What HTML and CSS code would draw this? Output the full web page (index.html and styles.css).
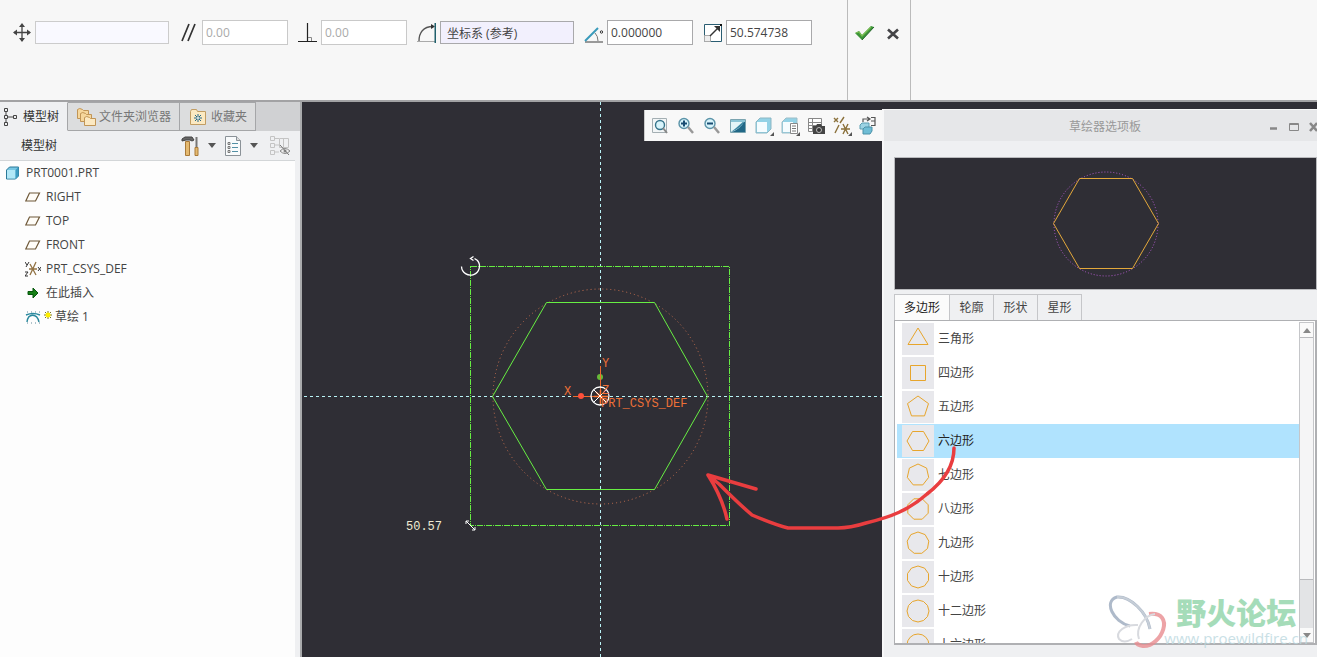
FILE: index.html
```html
<!DOCTYPE html>
<html lang="zh-CN">
<head>
<meta charset="utf-8">
<meta name="viewport" content="width=device-width, initial-scale=1">
<title>PRT0001.PRT</title>
<link rel="stylesheet" href="styles.css">
</head>
<body>
<header class="dashboard">
  <form class="fields">
    <div class="field">
      <label for="move"><svg class="icon" viewBox="0 0 20 20" role="img" aria-label="平移"><path d="M3 9.500H19M11 2V18" stroke="#444" stroke-width="1.300"/><path d="M2 9.500l4-3v6zM20 9.500l-4-3v6zM11 0l3 4H8zM11 19l3-4H8z" fill="#444"/></svg></label>
      <input class="wide pale" id="move" type="text">
    </div>
    <div class="field">
      <label for="parallel"><svg class="icon" viewBox="0 0 20 20" role="img" aria-label="平行"><path d="M4 18L11 1M10 18L17 1" stroke="#333" stroke-width="1.700"/></svg></label>
      <input class="off" id="parallel" type="text" value="0.00" disabled>
    </div>
    <div class="field">
      <label for="perp"><svg class="icon" viewBox="0 0 20 20" role="img" aria-label="垂直"><path d="M1 18.500H20M10.500 0V18" stroke="#222" stroke-width="1.200"/><path d="M11 14.500h3.500V18" fill="none" stroke="#888"/></svg></label>
      <input class="off" id="perp" type="text" value="0.00" disabled>
    </div>
    <div class="field">
      <label for="csys"><svg class="icon" viewBox="0 0 20 20" role="img" aria-label="旋转参考"><path d="M1 18.500H20" stroke="#aaa"/><path d="M3 18C3 10 7 3.500 17 3.500" fill="none" stroke="#555" stroke-width="1.300"/><path d="M15 1l4 2.500-4 2.500z" fill="#333"/><path d="M20 0V20" stroke="#20606c" stroke-width="3"/></svg></label>
      <input class="wide lilac" id="csys" type="text" value="坐标系 (参考)">
    </div>
    <div class="field">
      <label for="angle"><svg class="icon" viewBox="0 0 20 20" role="img" aria-label="角度"><path d="M2 19H20" stroke="#999" stroke-width="2"/><path d="M2 18L15 5" stroke="#399aba" stroke-width="2"/><path d="M12 10q3 3 3 8" fill="none" stroke="#777"/><circle cx="18.500" cy="9" r="1.200" fill="none" stroke="#333"/></svg></label>
      <input id="angle" type="text" value="0.000000">
    </div>
    <div class="field">
      <label for="scale"><svg class="icon" viewBox="0 0 20 20" role="img" aria-label="缩放"><path d="M2.500 1.500h17v17h-17z" fill="#fff" stroke="#2a5d72"/><path d="M2.500 12.500h6v6h-6z" fill="#eee" stroke="#aaa"/><path d="M8 13L16 5" stroke="#333" stroke-width="1.400"/><path d="M18 3v6l-6-6z" fill="#333"/><path d="M18 1h2v2h-2z" fill="#111"/></svg></label>
      <input id="scale" type="text" value="50.574738">
    </div>
  </form>
  <div class="confirm">
    <button type="button" aria-label="确定"><svg class="icon" viewBox="0 0 20 20"><path d="M0 10l4-2 3 4L16 3l3 1L7 17z" fill="#3b9438"/><path d="M1 10l3-1 3 4 9-9" fill="none" stroke="#79bd51" stroke-width="1.200"/><path d="M7 17L19 4" stroke="#25662c"/></svg></button>
    <button type="button" aria-label="取消"><svg class="icon" viewBox="0 0 20 20"><path d="M6 6.500L16 15.500M16 6.500L6 15.500" stroke="#444447" stroke-width="2.600"/></svg></button>
  </div>
</header>

<main class="work">
  <aside class="navigator">
    <nav class="nav-tabs">
      <button class="nav-tab current" type="button"><svg class="icon" viewBox="0 0 20 20"><path d="M4.500 1.500h3v3h-3zM4.500 8.500h3v3h-3zM4.500 15.500h3v3h-3zM13.500 8.500h3v3h-3zM8 10h5M6 5v3M6 12v3" fill="none" stroke="#444"/></svg>模型树</button>
      <button class="nav-tab" type="button"><svg class="icon" viewBox="0 0 20 20"><g fill="#f6d79c" stroke="#c19556"><path d="M1.500 2.500q2-2 5 0l1 1h5v8h-11z"/><path d="M4.500 6.500q2-2 5 0l1 1h5v7h-11z"/><path d="M8.500 10.500q2-2 5 0l1 1h5v7h-11z" fill="#fce9c2"/></g></svg>文件夹浏览器</button>
      <button class="nav-tab" type="button"><svg class="icon" viewBox="0 0 20 20"><path d="M2.500 4.500l1-2h5l1 2h8v13h-15z" fill="#fbe9c2" stroke="#c19d63"/><path d="M10 7v8M6 11h8M7 8l6 6M13 8l-6 6" stroke="#24698a"/><circle cx="10" cy="11" r="1" fill="#fff"/></svg>收藏夹</button>
    </nav>
    <div class="tree-bar">
      <h2>模型树</h2>
      <button type="button" aria-label="设置"><svg class="icon" viewBox="0 0 20 20"><path d="M1 3l3-2h7l2 3-2 1-2-1H5L1 5z" fill="#666" stroke="#444"/><path d="M4.500 5.500h4v14h-4z" fill="#e4b970" stroke="#a97a39"/><path d="M15.500 1v10" stroke="#777" stroke-width="2"/><path d="M14 11.500h3v8h-3z" fill="#e4b970" stroke="#a97a39"/></svg></button>
      <button class="drop" type="button" aria-label="设置菜单"><svg viewBox="0 0 8 5"><path d="M0 0h8L4 5z" fill="#555"/></svg></button>
      <button type="button" aria-label="显示"><svg class="icon" viewBox="0 0 20 20"><path d="M2.500.500h11l4 4v15h-15z" fill="#f9fbfc" stroke="#8b9298"/><path d="M13.500.500v4h4" fill="#ddd" stroke="#8b9298"/><path d="M9 7.500h6M9 11.500h6M9 15.500h6" stroke="#5390a5"/><path d="M5 6.500h2v2H5zM5 10.500h2v2H5zM5 14.500h2v2H5z" fill="none" stroke="#777"/></svg></button>
      <button class="drop" type="button" aria-label="显示菜单"><svg viewBox="0 0 8 5"><path d="M0 0h8L4 5z" fill="#555"/></svg></button>
      <button type="button" aria-label="隐藏"><svg class="icon" viewBox="0 0 20 20"><path d="M.500.500h4v4h-4zM.500 7.500h4v4h-4zM.500 14.500h4v4h-4zM9.500 2.500h9v9h-9zM5 9h4M5 16h4M5 2.500h4M13.500 2v9" fill="none" stroke="#c4c4c4"/><path d="M10 15q5-5 10 0-5 5-10 0z" fill="#eee" stroke="#888"/><circle cx="15" cy="15" r="1.500" fill="#888"/><path d="M10 9l9 10" stroke="#777"/></svg></button>
    </div>
    <ul class="tree">
      <li class="root"><svg class="glyph" viewBox="0 0 16 16"><path d="M1.500 5l3-3h9v9l-3 3h-9z" fill="#77c7e4" stroke="#2b7998"/><path d="M2 5h8.500v8.500H2z" fill="#b2e8f7"/><path d="M10.500 5l3-3v9l-3 3z" fill="#3d9bc1"/></svg>PRT0001.PRT</li>
      <li><svg class="glyph" viewBox="0 0 16 16"><path d="M4.500 4h10l-4 8H.800z" fill="#fffdf8" stroke="#6f5939" stroke-width="1.200"/></svg>RIGHT</li>
      <li><svg class="glyph" viewBox="0 0 16 16"><path d="M4.500 4h10l-4 8H.800z" fill="#fffdf8" stroke="#6f5939" stroke-width="1.200"/></svg>TOP</li>
      <li><svg class="glyph" viewBox="0 0 16 16"><path d="M4.500 4h10l-4 8H.800z" fill="#fffdf8" stroke="#6f5939" stroke-width="1.200"/></svg>FRONT</li>
      <li><svg class="glyph" viewBox="0 0 16 16"><path d="M4 8h8M5 3l6 11M11 1L5 14" stroke="#927344" stroke-width="1.300"/><path d="M0 1l2 3M4 1L1 6M0 11h3l-3 4h3M13 6l3 4M16 6l-3 4" fill="none" stroke="#333"/></svg>PRT_CSYS_DEF</li>
      <li><svg class="glyph" viewBox="0 0 16 16"><path d="M3 6.500h5V3l5 5-5 5V9.500H3z" fill="#168016" stroke="#07560d"/></svg>在此插入</li>
      <li class="sketch"><svg class="glyph" viewBox="0 0 16 16"><path d="M2 3h13M2 14h13" stroke="#64899a" stroke-dasharray="1 3"/><path d="M2 13C3 4 12 4 14 13M1 6q7-3 14 0" fill="none" stroke="#2b899e" stroke-width="1.400"/></svg><svg class="spark" viewBox="0 0 8 13"><path d="M4 0v8M0 4h8M1 1l6 6M7 1L1 7" stroke="#777126"/><circle cx="4" cy="4" r="2.500" fill="#fff000"/></svg>草绘 1</li>
    </ul>
  </aside>

  <section class="canvas" aria-label="草绘">
    <svg class="drawing" viewBox="0 0 580 555">
      <g fill="none">
        <path d="M-1000 294.500H580" stroke="#b9f3f6" stroke-dasharray="3 3"/>
        <path d="M298.500 0V1400" stroke="#b9f3f6" stroke-dasharray="3 3"/>
        <path d="M168.500 164.500H427.500V423.500H168.500Z" stroke="#66ed42" stroke-dasharray="6 1 1 1" shape-rendering="crispEdges"/>
        <circle cx="298.500" cy="294.500" r="107.500" stroke="#c8704f" stroke-dasharray="1 3"/>
        <path d="M190.500 294.500L244.500 200.500H352.500L405.500 294.500L352.500 387.500H244.500Z" stroke="#67ef43"/>
        <path d="M159.500 164.500a9 9 0 1 0 16-6l-3-2m-1 2l-3-2 3-2" stroke="#fff" stroke-width="1.300"/>
        <path d="M164 419l9 9m-9-6v-3h3m3 9h3v-3" stroke="#fff"/>
        <path d="M298.500 264V294.500H271" stroke="#ef692e"/>
        <path d="M298.500 288v14M292 294.500h14M294 290l10 10" stroke="#ff7532" stroke-width="1.500"/>
        <circle cx="298" cy="294" r="9" stroke="#fff" stroke-width="1.300"/>
        <path d="M292 288l12 12M304 288l-12 12" stroke="#fff"/>
      </g>
      <circle cx="279" cy="294" r="3" fill="#ff503b"/>
      <circle cx="298" cy="275" r="3" fill="#67ba38"/>
      <path d="M298.500 270v9" stroke="#ef692e"/>
      <g class="cad orange"><text x="262" y="293">X</text><text x="300" y="265">Y</text><text x="300" y="292">Z</text><text x="299" y="305">PRT_CSYS_DEF</text></g>
      <text class="cad cream" x="104" y="428">50.57</text>
    </svg>
    <div class="view-tools" role="toolbar" aria-label="视图">
      <button type="button" aria-label="重新调整"><svg class="icon" viewBox="0 0 20 20"><path d="M2.500 2.500h14v14h-14z" fill="#f3f6f7" stroke="#a4afb3"/><circle cx="10" cy="9" r="4.500" fill="#d8f4fb" stroke="#36748b" stroke-width="1.400"/><path d="M13 12l4 5" stroke="#888" stroke-width="2"/></svg></button>
      <button type="button" aria-label="放大"><svg class="icon" viewBox="0 0 20 20"><circle cx="8" cy="7.500" r="5" fill="#d8f4fb" stroke="#5b93a8" stroke-width="1.400"/><path d="M12 11l5 6" stroke="#999" stroke-width="2.500"/><path d="M5 7.500h6M8 4.500v6" stroke="#184c72" stroke-width="2"/></svg></button>
      <button type="button" aria-label="缩小"><svg class="icon" viewBox="0 0 20 20"><circle cx="8" cy="7.500" r="5" fill="#d8f4fb" stroke="#5b93a8" stroke-width="1.400"/><path d="M12 11l5 6" stroke="#999" stroke-width="2.500"/><path d="M5 7.500h6" stroke="#184c72" stroke-width="2"/></svg></button>
      <button type="button" aria-label="重画"><svg class="icon" viewBox="0 0 20 20"><path d="M2.500 3.500h15v13h-15z" fill="#e4f5f8" stroke="#7ba4b0"/><path d="M17 4v12H3q9-2 14-12z" fill="#216887"/><path d="M3 16l5-4 9-8q-3 8-14 12z" fill="#3b87a3"/><path d="M3 4h14v2H3z" fill="#8cc5d6"/></svg></button>
      <button type="button" aria-label="显示样式"><svg class="icon" viewBox="0 0 20 20"><path d="M2 6l4-4h11v11l-4 4H2z" fill="#93d2e6" stroke="#8cb6c3"/><path d="M3 6h10v10H3z" fill="#f5fcff"/><path d="M20 16v4h-4z" fill="#555"/></svg></button>
      <button type="button" aria-label="已保存方向"><svg class="icon" viewBox="0 0 20 20"><path d="M2 6l4-4h11v11l-4 4H2z" fill="#93d2e6" stroke="#9dbdc7"/><path d="M3 6h10v10H3z" fill="#f5fcff"/><path d="M10.500 7.500h7v10h-7z" fill="#fff" stroke="#888"/><path d="M12 10h4M12 12.500h4M12 15h4" stroke="#777"/><path d="M20 16v4h-4z" fill="#555"/></svg></button>
      <button type="button" aria-label="视图管理器"><svg class="icon" viewBox="0 0 20 20"><path d="M2.500 2.500h13v13h-13zM2 6.500h13M2 9.500h13M2 12.500h13M6.500 2v13" fill="#fff" stroke="#888"/><path d="M7 10h3l1-2h4l1 2h3v8H7z" fill="#444"/><circle cx="13" cy="14" r="2.500" fill="#333" stroke="#bbb"/></svg></button>
      <button type="button" aria-label="基准显示"><svg class="icon" viewBox="0 0 20 20"><path d="M2 2l4 4M6 2L2 6M12 1L8 7M7 9L3 17M9 13h9M11 8l5 10M16 8l-5 10" stroke="#8b713b" stroke-width="1.400"/><path d="M20 16v4h-4z" fill="#555"/></svg></button>
      <button type="button" aria-label="草绘视图"><svg class="icon" viewBox="0 0 20 20"><path d="M5 6V3h6M9 1l3 2-3 2M13 1.500h4v8h-4M13 5h4" fill="none" stroke="#555" stroke-width="1.200"/><path d="M2 9l2-2h7v4l-2 2H2z" fill="#9bd3e4" stroke="#5c9eb2"/><path d="M5 13l2-2h7v4l-2 3H5z" fill="#6fbdd5" stroke="#4c91a8"/></svg></button>
    </div>
  </section>

  <section class="palette" aria-label="草绘器选项板">
    <div class="title-bar">
      <h2>草绘器选项板</h2>
      <button type="button" aria-label="最小化"><svg viewBox="0 0 12 12"><path d="M2 7.500h7" stroke="#888" stroke-width="2.500"/></svg></button>
      <button type="button" aria-label="最大化"><svg viewBox="0 0 12 12"><path d="M1.500 2.500h9v7h-9zM1 3.500h10" fill="none" stroke="#888"/></svg></button>
      <button type="button" aria-label="关闭"><svg viewBox="0 0 12 12"><path d="M2 2l7 8M9 2L2 10" stroke="#888" stroke-width="2.500"/></svg></button>
    </div>
    <div class="palette-body">
      <div class="preview"><svg viewBox="0 0 106 106" fill="none"><circle cx="53" cy="53" r="52" stroke="#b45bd0" stroke-dasharray="1 2"/><path d="M.500 52.500L26.500 7.500H79.500L105.500 52.500L79.500 97.500H26.500Z" stroke="#e3a83b"/></svg></div>
      <div class="shape-tabs" role="tablist">
        <button class="chosen" type="button" role="tab" aria-selected="true">多边形</button><button type="button" role="tab" aria-selected="false">轮廓</button><button type="button" role="tab" aria-selected="false">形状</button><button type="button" role="tab" aria-selected="false">星形</button>
      </div>
      <div class="shape-box">
        <ul class="shapes">
          <li><svg viewBox="0 0 32 32"><path d="M16 5L26 21.500H6Z"/></svg>三角形</li>
          <li><svg viewBox="0 0 32 32"><path d="M8.500 8.500h15v15h-15z"/></svg>四边形</li>
          <li><svg viewBox="0 0 32 32"><path d="M16 5L26.500 12.600L22.500 24.900H9.500L5.500 12.600Z"/></svg>五边形</li>
          <li class="selected"><svg viewBox="0 0 32 32"><path d="M5 16L10.500 6.500H21.500L27 16L21.500 25.500H10.500Z"/></svg>六边形</li>
          <li><svg viewBox="0 0 32 32"><path d="M16 5L24.600 9.100L26.700 18.400L20.800 25.900H11.200L5.300 18.400L7.400 9.100Z"/></svg>七边形</li>
          <li><svg viewBox="0 0 32 32"><path d="M11.800 5.800H20.200L26.200 11.800V20.200L20.200 26.200H11.800L5.800 20.200V11.800Z"/></svg>八边形</li>
          <li><svg viewBox="0 0 32 32"><path d="M16 5L23.100 7.600L26.800 14.100L25.500 21.500L19.800 26.300H12.200L6.500 21.500L5.200 14.100L8.900 7.600Z"/></svg>九边形</li>
          <li><svg viewBox="0 0 32 32"><path d="M16 5L22.500 7.100L26.500 12.600V19.400L22.500 24.900L16 27L9.500 24.900L5.500 19.400V12.600L9.500 7.100Z"/></svg>十边形</li>
          <li><svg viewBox="0 0 32 32"><path d="M16 5L21.500 6.500L25.500 10.500L27 16L25.500 21.500L21.500 25.500L16 27L10.500 25.500L6.500 21.500L5 16L6.500 10.500L10.500 6.500Z"/></svg>十二边形</li>
          <li><svg viewBox="0 0 32 32"><circle cx="16" cy="16" r="11"/></svg>十六边形</li>
        </ul>
        <div class="scrollbar">
          <button type="button" aria-label="向上滚动"><svg viewBox="0 0 8 5"><path d="M0 5h8L4 0z" fill="#888"/></svg></button>
          <div class="thumb"></div>
          <div class="track"></div>
          <button type="button" aria-label="向下滚动"><svg viewBox="0 0 8 5"><path d="M0 0h8L4 5z" fill="#888"/></svg></button>
        </div>
      </div>
    </div>
    <svg class="arrow" viewBox="0 0 260 100" fill="none"><path d="M249 4C249 21 239 37 222 50C204 66 186 73 161 79Q145 84 133 84H83C71 81 61 77 47 71C34 60 24 50 14 40L3 31M3 31L51 45M3 31Q17 53 22 75" stroke="#e93d3f" stroke-width="3.500" stroke-linecap="round" stroke-linejoin="round"/></svg>
    <div class="watermark">
      <svg viewBox="0 0 60 56"><g fill="none"><path d="M42 36C39 19 22 3 9 4C-5 8 5 29 22 33" stroke="#9ba9bd" stroke-width="3"/><path d="M42 36C39 19 22 3 9 4" stroke="#b8c2ce" stroke-width="2"/><path d="M41 21C68 18 54 54 35 53Q29 52 28 49" stroke="#e98d91" stroke-width="4"/><path d="M30 32C17 31 7 39 11 46Q16 51 24 46M31 46C27 35 37 22 47 21" stroke="#cfd2d8" stroke-width="2"/></g></svg>
      <p><strong>野火论坛</strong><span>www.proewildfire.cn</span></p>
    </div>
  </section>
</main>
</body>
</html>
```
FILE: styles.css
```css
* { box-sizing: border-box; }

body {
  margin: 0;
  min-height: 100vh;
  display: flex;
  flex-direction: column;
  background: #2f2e35;
  color: #444;
  font: 12px/18px "Open Sans", "Noto Sans CJK SC", sans-serif;
}

button {
  display: flex;
  align-items: center;
  justify-content: center;
  margin: 0;
  padding: 0;
  border: 0;
  background: none;
  color: inherit;
  font: inherit;
}

h2 { margin: 0; font: inherit; }
ul { margin: 0; padding: 0; list-style: none; }
svg { display: block; flex: none; }
.icon { width: 20px; height: 20px; }

/* dashboard */
.dashboard {
  display: flex;
  min-height: 102px;
  border-bottom: 2px solid #a2a2a4;
  background: #f7f7f7;
}
.fields {
  display: flex;
  align-items: flex-start;
  gap: 9px;
  padding: 20px 35px 0 11px;
}
.field { display: flex; align-items: center; gap: 4px; height: 25px; }
.field input {
  width: 86px;
  height: 25px;
  padding: 0 3px;
  border: 1px solid #a9a9ab;
  background: #fff;
  color: #444;
  font: inherit;
}
.field .wide { width: 134px; height: 23px; padding: 0 6px; }
.field .pale { border-color: #ccc; background: #f9f9ff; }
.field .lilac { background: #f2f0fd; }
.field .off { border-color: #c9c9c9; color: #aaa; }
.confirm {
  display: flex;
  gap: 7px;
  align-items: flex-start;
  width: 64px;
  padding: 23px 8px 0 7px;
  border: solid #bbb;
  border-width: 0 1px;
}

/* work area */
.work { flex: 1; display: flex; position: relative; min-height: 555px; }

.navigator {
  flex: none;
  width: 302px;
  display: flex;
  flex-direction: column;
  border-right: 2px solid #a9aaac;
  background: #eff0f2;
}
.nav-tabs { display: flex; height: 29px; background: #d0d1d3; }
.nav-tab {
  gap: 3px;
  padding: 0 8px;
  border: solid #a5a6a8;
  border-width: 1px 1px 1px 0;
  background: #dcddde;
  color: #777;
}
.nav-tab.current {
  padding: 0 8px 0 0;
  border-color: #eff0f2 #a5a6a8 #eff0f2;
  background: #eff0f2;
  color: #333;
}
.tree-bar { display: flex; align-items: center; height: 29px; padding: 0 10px 0 21px; }
.tree-bar h2 { flex: 1; color: #333; }
.drop { width: 22px; height: 20px; }
.drop svg { width: 8px; height: 5px; }
.tree-bar button:last-child { margin-left: 5px; }
.tree {
  flex: 1;
  margin-right: 5px;
  border-top: 1px solid #d3d6d8;
  background: #fdfdfd;
}
.tree li {
  display: flex;
  align-items: center;
  gap: 5px;
  height: 24px;
  padding-left: 25px;
}
.tree .root { padding-left: 5px; }
.tree .sketch { gap: 3px; }
.spark { width: 8px; height: 13px; }
.glyph { width: 16px; height: 16px; }

/* sketch canvas */
.canvas { flex: 1; position: relative; overflow: hidden; background: #2f2e35; }
.drawing {
  position: absolute;
  top: 0;
  right: 0;
  width: 580px;
  height: 555px;
  overflow: visible;
}
.cad { font: 12px/14px "Liberation Mono", monospace; }
.orange { fill: #ed7037; }
.cream { fill: #f0ebd3; }
.view-tools {
  position: absolute;
  top: 8px;
  right: 0;
  display: flex;
  gap: 6px;
  align-items: center;
  height: 31px;
  padding: 0 2px 0 5px;
  border-left: 1px solid #ccc;
  background: #f8f8f8;
}
.view-tools button:last-child { margin-right: 2px; }

/* palette window */
.palette {
  flex: none;
  position: relative;
  width: 435px;
  margin-top: 7px;
  display: flex;
  flex-direction: column;
  border-left: 2px solid #f7f7f8;
  background: #eff0f2;
}
.title-bar {
  display: flex;
  align-items: center;
  gap: 8px;
  height: 32px;
  padding-top: 2px;
  overflow: hidden;
  border-top: 1px solid #f6f6f6;
  background: #e6e7e9;
  color: #999;
}
.title-bar h2 { flex: 1; padding-left: 66px; text-align: center; }
.title-bar button { flex: none; width: 12px; height: 12px; }
.title-bar button svg { width: 12px; height: 12px; }
.title-bar button:last-child { margin-right: -3px; }
.palette-body {
  flex: 1;
  min-height: 0;
  display: flex;
  flex-direction: column;
  padding: 16px 0 12px 10px;
}
.preview {
  display: flex;
  align-items: center;
  justify-content: center;
  height: 133px;
  border: 1px solid #b9babd;
  background: #2f2e35;
}
.preview svg { width: 106px; height: 106px; }
.shape-tabs { display: flex; height: 26px; margin-top: 4px; }
.shape-tabs button {
  width: 44px;
  border: solid #c5c6c9;
  border-width: 1px 1px 0 0;
}
.shape-tabs .chosen { width: 56px; border-left-width: 1px; background: #fbfbfb; color: #222; }
.shape-box {
  flex: 1 1 0;
  min-height: 0;
  display: flex;
  padding: 1px 1px 0 2px;
  border: solid #afb0b3;
  border-width: 1px 2px 2px 1px;
  background: #fff;
}
.shapes { flex: 1; overflow: hidden; }
.shapes li {
  display: flex;
  align-items: center;
  gap: 4px;
  height: 34px;
  padding-left: 5px;
}
.shapes .selected { background: #b0e3fe; color: #222; }
.shapes svg {
  width: 32px;
  height: 32px;
  background: #e8e8ec;
  fill: none;
  stroke: #e7a52c;
}
.scrollbar {
  display: flex;
  flex-direction: column;
  width: 15px;
  border: 1px solid #c5c6c9;
  background: #e3e4e6;
}
.scrollbar button { height: 14px; background: #fafafa; }
.scrollbar button svg { width: 8px; height: 5px; }
.thumb { flex: 5; border: solid #b9babd; border-width: 1px 0; background: #f5f5f6; }
.track { flex: 1; }

/* marks lying over the windows */
.arrow {
  position: absolute;
  left: -179px;
  top: 335px;
  width: 260px;
  height: 100px;
  pointer-events: none;
}
.watermark {
  position: absolute;
  right: 9px;
  bottom: 8px;
  display: flex;
  opacity: .8;
  pointer-events: none;
}
.watermark svg { width: 60px; height: 56px; margin-right: -4px; }
.watermark p { display: flex; flex-direction: column; margin: 0; white-space: nowrap; }
.watermark strong {
  padding-left: 12px;
  color: #8fd4a8;
  font: 900 30px/36px "Noto Sans CJK SC", sans-serif;
}
.watermark span { color: #bcd9df; font-size: 15px; line-height: 18px; }
```
